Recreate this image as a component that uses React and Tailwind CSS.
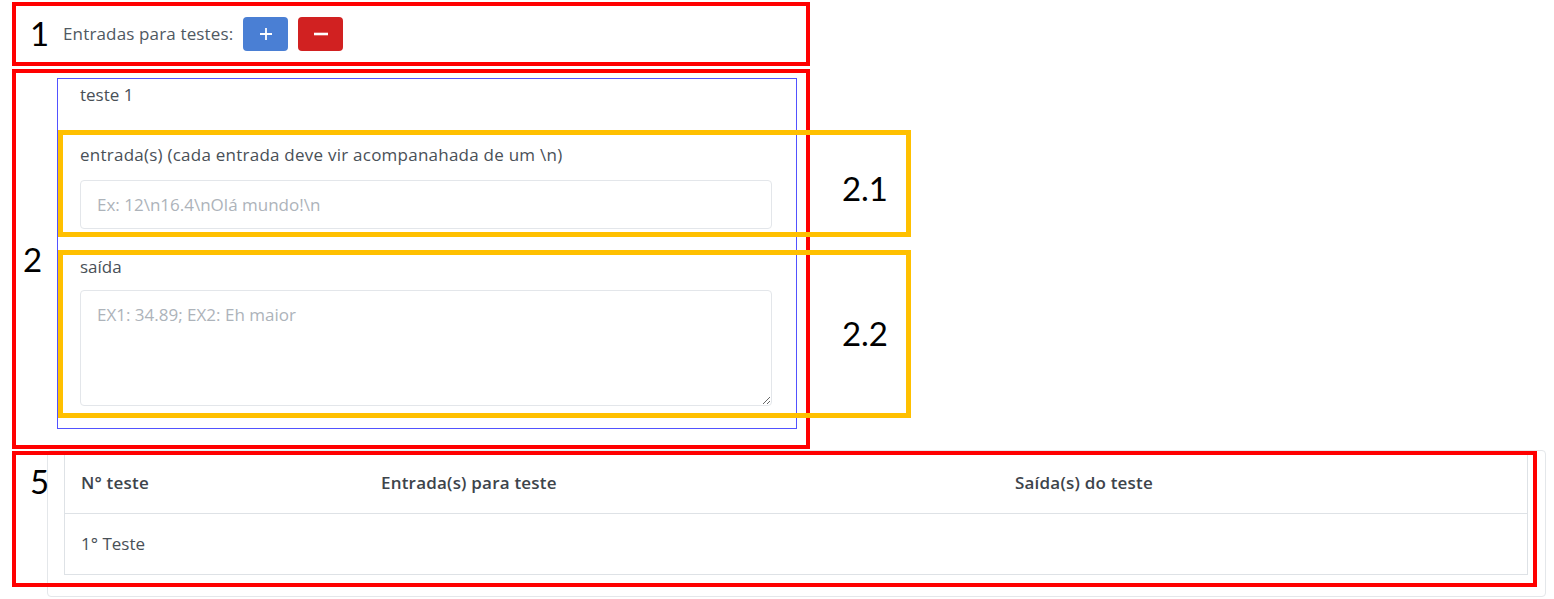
import React from "react";

const num = "text-[33px] leading-[33px] text-black font-['Lato',sans-serif]";

export default function App() {
  return (
    <div className="relative w-[1554px] h-[599px] bg-white overflow-hidden font-['Open_Sans',sans-serif] text-[#495057]">
      {/* 1: header row */}
      <div className="ml-[12px] mt-[2px] w-[798px] h-[64px] border-4 border-[#ff0000] flex items-center">
        <div className={num + " ml-[14px] w-[33px] -mt-[2px]"}>1</div>
        <span className="text-[17px] leading-[34px] text-[#4f5962] mr-[10px] tracking-[0.15px]">Entradas para testes:</span>
        <div className="flex gap-[10px]">
          <button className="w-[45px] h-[34px] rounded-[4px] bg-[#4a7fd4] flex items-center justify-center">
            <svg width="14" height="14" viewBox="0 0 14 14">
              <path d="M7 1v12M1 7h12" stroke="white" strokeWidth="1.8" />
            </svg>
          </button>
          <button className="w-[45px] h-[34px] rounded-[4px] bg-[#d12121] flex items-center justify-center">
            <svg width="16" height="14" viewBox="0 0 16 14">
              <path d="M1 7h14" stroke="white" strokeWidth="2.6" />
            </svg>
          </button>
        </div>
      </div>

      {/* 2: test block */}
      <div className="ml-[12px] mt-[3px] w-[798px] h-[380px] border-4 border-[#ff0000] flex items-start">
        <div className={num + " self-center ml-[7px] w-[34px] mt-[1px]"}>2</div>
        <div className="mt-[5px] w-[740px] h-[351px] border border-[#5252ff] px-[22px] flex flex-col">
          <div className="mt-[4px] text-[17px] leading-[24px]">teste 1</div>
          <label className="mt-[36px] text-[17px] leading-[24px] tracking-[0.24px]">
            entrada(s) (cada entrada deve vir acompanahada de um \n)
          </label>
          <input
            className="mt-[13px] block w-[692px] h-[49px] border border-[#e3e6ea] rounded-[4px] px-[16px] text-[17px] outline-none placeholder:text-[#adb3ba]"
            placeholder="Ex: 12\n16.4\nOlá mundo!\n"
          />
          <label className="mt-[26px] text-[17px] leading-[24px]">saída</label>
          <textarea
            className="mt-[11px] block w-[692px] h-[116px] border border-[#e3e6ea] rounded-[4px] px-[16px] py-[12px] text-[17px] leading-[24px] outline-none placeholder:text-[#adb3ba]"
            placeholder="EX1: 34.89; EX2: Eh maior"
          />
        </div>
      </div>

      {/* results card */}
      <div className="ml-[47px] mt-[1px] w-[1499px] h-[147px] border border-[#e4e7ea] rounded-[4px] pl-[16px] pt-[1px]">
        <div className="w-[1464px] border border-[#dee2e6] text-[17px]">
          <div className="grid grid-cols-[300px_634px_530px] h-[61px] items-center border-b border-[#dee2e6] font-semibold text-[#3d444b] tracking-[0.2px]">
            <div className="pl-[16px]">N° teste</div>
            <div className="pl-[16px]">Entrada(s) para teste</div>
            <div className="pl-[16px]">Saída(s) do teste</div>
          </div>
          <div className="grid grid-cols-[300px_634px_530px] h-[60px] items-center">
            <div className="pl-[16px]">1° Teste</div>
            <div></div>
            <div></div>
          </div>
        </div>
      </div>

      {/* annotation overlays */}
      <div className="absolute left-[12px] top-[451px] w-[1525px] h-[136px] border-4 border-[#ff0000] pl-[14px] pt-[10px]">
        <div className={num}>5</div>
      </div>
      <div className="absolute left-[58px] top-[130px] w-[853px] h-[107px] border-[5px] border-[#ffc000] flex justify-end items-start pt-[37px] pr-[18px]">
        <div className={num}>2.1</div>
      </div>
      <div className="absolute left-[58px] top-[250px] w-[853px] h-[168px] border-[5px] border-[#ffc000] flex justify-end items-start pt-[62px] pr-[18px]">
        <div className={num}>2.2</div>
      </div>
    </div>
  );
}
